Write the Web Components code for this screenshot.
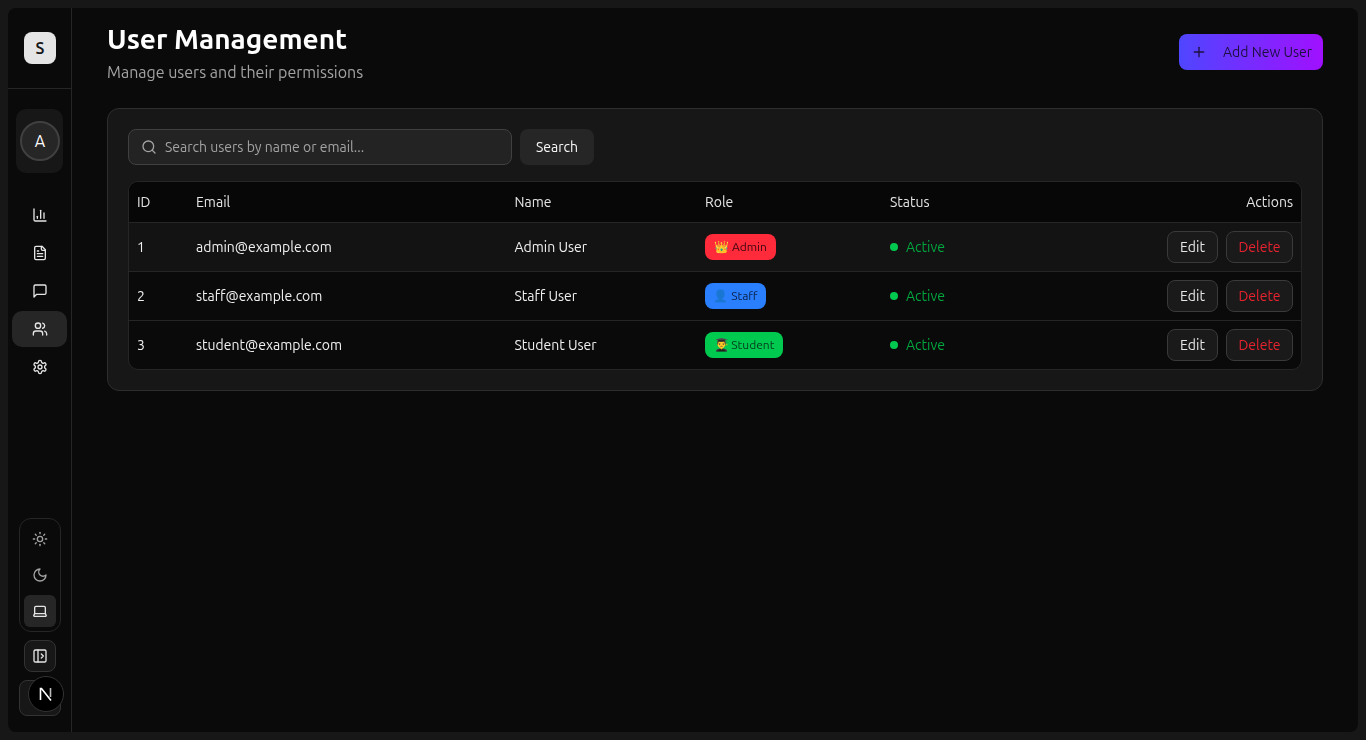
<!DOCTYPE html>
<html lang="en">
<head>
<meta charset="utf-8">
<title>User Management</title>
<style>
html, body { margin: 0; height: 100%; background: #171717; overflow: hidden; }
body { font-family: "Ubuntu Sans", Ubuntu, "Noto Sans", sans-serif; color: #fafafa; }
</style>
</head>
<body>

<app-shell>
    <side-bar slot="side"></side-bar>
    <page-header title="User Management" subtitle="Manage users and their permissions"></page-header>
    <users-card>
        <user-row uid="1" email="admin@example.com" name="Admin User" role="admin" hover></user-row>
        <user-row uid="2" email="staff@example.com" name="Staff User" role="staff"></user-row>
        <user-row uid="3" email="student@example.com" name="Student User" role="student"></user-row>
    </users-card>
</app-shell>

<script>
const ICONS = {
    chart: '<path d="M3 3v16a2 2 0 0 0 2 2h16"/><path d="M18 17V9"/><path d="M13 17V5"/><path d="M8 17v-3"/>',
    file: '<path d="M15 2H6a2 2 0 0 0-2 2v16a2 2 0 0 0 2 2h12a2 2 0 0 0 2-2V7Z"/><path d="M14 2v4a2 2 0 0 0 2 2h4"/><path d="M10 9H8"/><path d="M16 13H8"/><path d="M16 17H8"/>',
    message: '<path d="M21 15a2 2 0 0 1-2 2H7l-4 4V5a2 2 0 0 1 2-2h14a2 2 0 0 1 2 2z"/>',
    users: '<path d="M16 21v-2a4 4 0 0 0-4-4H6a4 4 0 0 0-4 4v2"/><circle cx="9" cy="7" r="4"/><path d="M22 21v-2a4 4 0 0 0-3-3.87"/><path d="M16 3.13a4 4 0 0 1 0 7.75"/>',
    settings: '<path d="M12.22 2h-.44a2 2 0 0 0-2 2v.18a2 2 0 0 1-1 1.73l-.43.25a2 2 0 0 1-2 0l-.15-.08a2 2 0 0 0-2.73.73l-.22.38a2 2 0 0 0 .73 2.73l.15.1a2 2 0 0 1 1 1.72v.51a2 2 0 0 1-1 1.74l-.15.09a2 2 0 0 0-.73 2.73l.22.38a2 2 0 0 0 2.73.73l.15-.08a2 2 0 0 1 2 0l.43.25a2 2 0 0 1 1 1.73V20a2 2 0 0 0 2 2h.44a2 2 0 0 0 2-2v-.18a2 2 0 0 1 1-1.73l.43-.25a2 2 0 0 1 2 0l.15.08a2 2 0 0 0 2.73-.73l.22-.39a2 2 0 0 0-.73-2.73l-.15-.08a2 2 0 0 1-1-1.74v-.5a2 2 0 0 1 1-1.74l.15-.09a2 2 0 0 0 .73-2.73l-.22-.38a2 2 0 0 0-2.73-.73l-.15.08a2 2 0 0 1-2 0l-.43-.25a2 2 0 0 1-1-1.73V4a2 2 0 0 0-2-2z"/><circle cx="12" cy="12" r="3"/>',
    sun: '<circle cx="12" cy="12" r="4"/><path d="M12 2v2"/><path d="M12 20v2"/><path d="m4.93 4.93 1.41 1.41"/><path d="m17.66 17.66 1.41 1.41"/><path d="M2 12h2"/><path d="M20 12h2"/><path d="m6.34 17.66-1.41 1.41"/><path d="m19.07 4.93-1.41 1.41"/>',
    moon: '<path d="M12 3a6 6 0 0 0 9 9 9 9 0 1 1-9-9Z"/>',
    laptop: '<path d="M20 16V7a2 2 0 0 0-2-2H6a2 2 0 0 0-2 2v9m16 0H4m16 0 1.28 2.55a1 1 0 0 1-.9 1.45H3.62a1 1 0 0 1-.9-1.45L4 16"/>',
    panel: '<rect width="18" height="18" x="3" y="3" rx="2"/><path d="M9 3v18"/><path d="m14 9 3 3-3 3"/>',
    search: '<circle cx="11" cy="11" r="8"/><path d="m21 21-4.3-4.3"/>',
    plus: '<path d="M5 12h14"/><path d="M12 5v14"/>'
};

class UiIcon extends HTMLElement {
    connectedCallback(){
        const size = this.getAttribute('size') || 16;
        this.attachShadow({mode: 'open'}).innerHTML = `
        <style>
            :host { display: inline-flex; flex: none; width: ${size}px; height: ${size}px; }
            svg { display: block; }
        </style>
        <svg xmlns="http://www.w3.org/2000/svg" width="${size}" height="${size}" viewBox="0 0 24 24" fill="none"
            stroke="currentColor" stroke-width="2" stroke-linecap="round" stroke-linejoin="round">${ICONS[this.getAttribute('name')]}</svg>`;
    }
}

class AppShell extends HTMLElement {
    constructor(){
        super();
        this.attachShadow({mode: 'open'}).innerHTML = `
        <style>
            :host { display: block; height: 100vh; box-sizing: border-box; padding: 8px; }
            .frame {
                display: flex;
                height: 100%;
                background: #0a0a0a;
                border-radius: 8px;
                overflow: hidden;
            }
            main { flex: 1; min-width: 0; padding: 9px 35px 0; will-change: transform; }
        </style>
        <div class="frame">
            <slot name="side"></slot>
            <main><slot></slot></main>
        </div>`;
    }
}

class SideBar extends HTMLElement {
    constructor(){
        super();
        this.attachShadow({mode: 'open'}).innerHTML = `
        <style>
            :host {
                display: flex;
                flex-direction: column;
                position: relative;
                width: 64px;
                flex: none;
                box-sizing: border-box;
                border-right: 1px solid #262626;
                color: #e5e5e5;
            }
            .brand { height: 81px; box-sizing: border-box; flex: none; border-bottom: 1px solid #262626; display: flex; padding: 24px 0 0 16px; }
            .logo {
                width: 32px; height: 32px; border-radius: 8px; background: #e5e5e5; color: #171717;
                display: flex; align-items: center; justify-content: center;
                font-size: 16px; font-weight: 600;
            }
            .who { margin: 20px 0 0 8px; width: 47px; height: 64px; border-radius: 10px; background: #171717; display: flex; align-items: center; justify-content: center; }
            .avatar {
                width: 40px; height: 40px; box-sizing: border-box; margin-left: 1px; border-radius: 50%; border: 2px solid #404040; background: #262626;
                display: flex; align-items: center; justify-content: center; font-size: 16px; color: #fafafa;
            }
            nav { margin: 24px 0 0 4px; display: flex; flex-direction: column; gap: 2px; width: 55px; }
            nav a { height: 36px; border-radius: 10px; display: flex; align-items: center; justify-content: center; color: #e5e5e5; }
            nav a.on { background: #262626; }
            nav ui-icon { position: relative; left: .5px; }
            .bottom { margin-top: auto; display: flex; flex-direction: column; align-items: center; padding: 0 0 16px 1px; }
            .themes { width: 42px; height: 114px; box-sizing: border-box; border: 1px solid #262626; border-radius: 12px; padding: 4px; display: flex; flex-direction: column; gap: 4px; }
            .themes span { width: 32px; height: 32px; flex: none; border-radius: 6px; display: flex; align-items: center; justify-content: center; color: #a3a3a3; }
            .themes span.on { background: #262626; color: #e5e5e5; }
            .toggle { margin-top: 8px; width: 32px; height: 32px; box-sizing: border-box; border: 1px solid #333; border-radius: 8px; background: #171717; display: flex; align-items: center; justify-content: center; }
            .user { margin-top: 8px; width: 42px; height: 36px; box-sizing: border-box; border: 1px solid #333; border-radius: 8px; background: #171717; }
            .dev {
                position: absolute; left: 20px; top: 668px; width: 36px; height: 36px; box-sizing: border-box;
                border-radius: 50%; background: #000; border: 1px solid #333;
                display: flex; align-items: center; justify-content: center;
            }
        </style>
        <div class="brand"><div class="logo">S</div></div>
        <div class="who"><div class="avatar">A</div></div>
        <nav>
            <a><ui-icon name="chart"></ui-icon></a>
            <a><ui-icon name="file"></ui-icon></a>
            <a><ui-icon name="message"></ui-icon></a>
            <a class="on"><ui-icon name="users"></ui-icon></a>
            <a><ui-icon name="settings"></ui-icon></a>
        </nav>
        <div class="bottom">
            <div class="themes">
                <span><ui-icon name="sun"></ui-icon></span>
                <span><ui-icon name="moon"></ui-icon></span>
                <span class="on"><ui-icon name="laptop"></ui-icon></span>
            </div>
            <div class="toggle"><ui-icon name="panel"></ui-icon></div>
            <div class="user"></div>
        </div>
        <div class="dev">
            <svg width="18" height="18" viewBox="0 0 18 18" fill="none">
                <path d="M3.5 15V3.5h1L14 15.5" stroke="#fff" stroke-width="1.6"/>
                <path d="M13.5 3v9" stroke="#bbb" stroke-width="1.6"/>
            </svg>
        </div>`;
    }
}

class PageHeader extends HTMLElement {
    connectedCallback(){
        this.attachShadow({mode: 'open'}).innerHTML = `
        <style>
            :host { display: flex; justify-content: space-between; align-items: flex-start; height: 91px; }
            h1 { margin: 0; font-size: 28px; line-height: 46px; font-weight: 700; color: #fff; }
            p { margin: 0; font-size: 16px; line-height: 20px; color: #a3a3a3; }
            button {
                margin-top: 17px; width: 144px; height: 36px; border: 0; border-radius: 8px;
                background: linear-gradient(90deg, #4f46ff, #a010ff);
                color: #1c1040; font: 14px "Ubuntu Sans", Ubuntu, "Noto Sans", sans-serif; white-space: nowrap;
                display: flex; align-items: center; gap: 16px; padding: 0 12px;
            }
        </style>
        <div>
            <h1>${this.getAttribute('title')}</h1>
            <p>${this.getAttribute('subtitle')}</p>
        </div>
        <button><ui-icon name="plus"></ui-icon>Add New User</button>`;
    }
}

const COLUMNS = '59px 318.5px 190.5px 185px 200px 1fr';

class UsersCard extends HTMLElement {
    constructor(){
        super();
        this.attachShadow({mode: 'open'}).innerHTML = `
        <style>
            :host {
                display: block; box-sizing: border-box; height: 283px; padding: 20px;
                background: #171717; border: 1px solid #2e2e2e; border-radius: 12px; font-size: 14px;
            }
            .bar { display: flex; gap: 8px; }
            .field {
                width: 384px; height: 36px; box-sizing: border-box; display: flex; align-items: center; gap: 8px; padding: 0 12px;
                background: #232323; border: 1px solid #404040; border-radius: 8px; color: #a3a3a3;
            }
            .btn { height: 36px; width: 74px; border-radius: 8px; background: #262626; display: flex; align-items: center; justify-content: center; color: #fafafa; }
            .table { margin-top: 16px; border: 1px solid #262626; border-radius: 10px; overflow: hidden; background: #0a0a0a; }
            .head { height: 40px; background: #070707; display: grid; grid-template-columns: ${COLUMNS}; align-items: center; color: #e5e5e5; }
            .head span { padding: 0 8px; }
            .head span:last-child { text-align: right; }
        </style>
        <div class="bar">
            <div class="field"><ui-icon name="search"></ui-icon>Search users by name or email...</div>
            <div class="btn">Search</div>
        </div>
        <div class="table">
            <div class="head"><span>ID</span><span>Email</span><span>Name</span><span>Role</span><span>Status</span><span>Actions</span></div>
            <slot></slot>
        </div>`;
    }
}

const ROLES = {
    admin: {label: '👑 Admin', bg: '#ff2a3a', fg: '#3a0610', width: 71},
    staff: {label: '👤 Staff', bg: '#2a7fff', fg: '#0a2148', width: 61},
    student: {label: '👨‍🎓 Student', bg: '#00c94f', fg: '#043a1a', width: 78}
};

class UserRow extends HTMLElement {
    connectedCallback(){
        const role = ROLES[this.getAttribute('role')];
        this.attachShadow({mode: 'open'}).innerHTML = `
        <style>
            :host {
                display: grid; grid-template-columns: ${COLUMNS}; align-items: center;
                height: 49px; box-sizing: border-box; border-top: 1px solid #262626; color: #f0f0f0; font-size: 14px;
                background: ${this.hasAttribute('hover') ? '#131313' : 'transparent'};
            }
            .c { padding: 0 8px; }
            .badge {
                display: inline-flex; align-items: center; justify-content: center; height: 26px; width: ${role.width}px;
                border-radius: 8px; background: ${role.bg}; color: ${role.fg}; font-size: 12px; white-space: nowrap; vertical-align: middle;
            }
            .status { display: flex; align-items: center; gap: 8px; color: #00a63e; font-size: 14px; }
            .dot { width: 8px; height: 8px; border-radius: 50%; background: #00c94f; }
            .actions { display: flex; justify-content: flex-end; gap: 8px; }
            .actions span {
                height: 32px; box-sizing: border-box; border: 1px solid #3a3a3a; border-radius: 8px; background: #1a1a1a;
                display: flex; align-items: center; justify-content: center;
            }
            .edit { width: 51px; color: #e5e5e5; }
            .del { width: 67px; color: #e8222f; }
        </style>
        <div class="c">${this.getAttribute('uid')}</div>
        <div class="c">${this.getAttribute('email')}</div>
        <div class="c">${this.getAttribute('name')}</div>
        <div class="c"><span class="badge">${role.label}</span></div>
        <div class="c status"><span class="dot"></span>Active</div>
        <div class="c actions"><span class="edit">Edit</span><span class="del">Delete</span></div>`;
    }
}

customElements.define('ui-icon', UiIcon);
customElements.define('app-shell', AppShell);
customElements.define('side-bar', SideBar);
customElements.define('page-header', PageHeader);
customElements.define('users-card', UsersCard);
customElements.define('user-row', UserRow);
</script>
</body>
</html>
